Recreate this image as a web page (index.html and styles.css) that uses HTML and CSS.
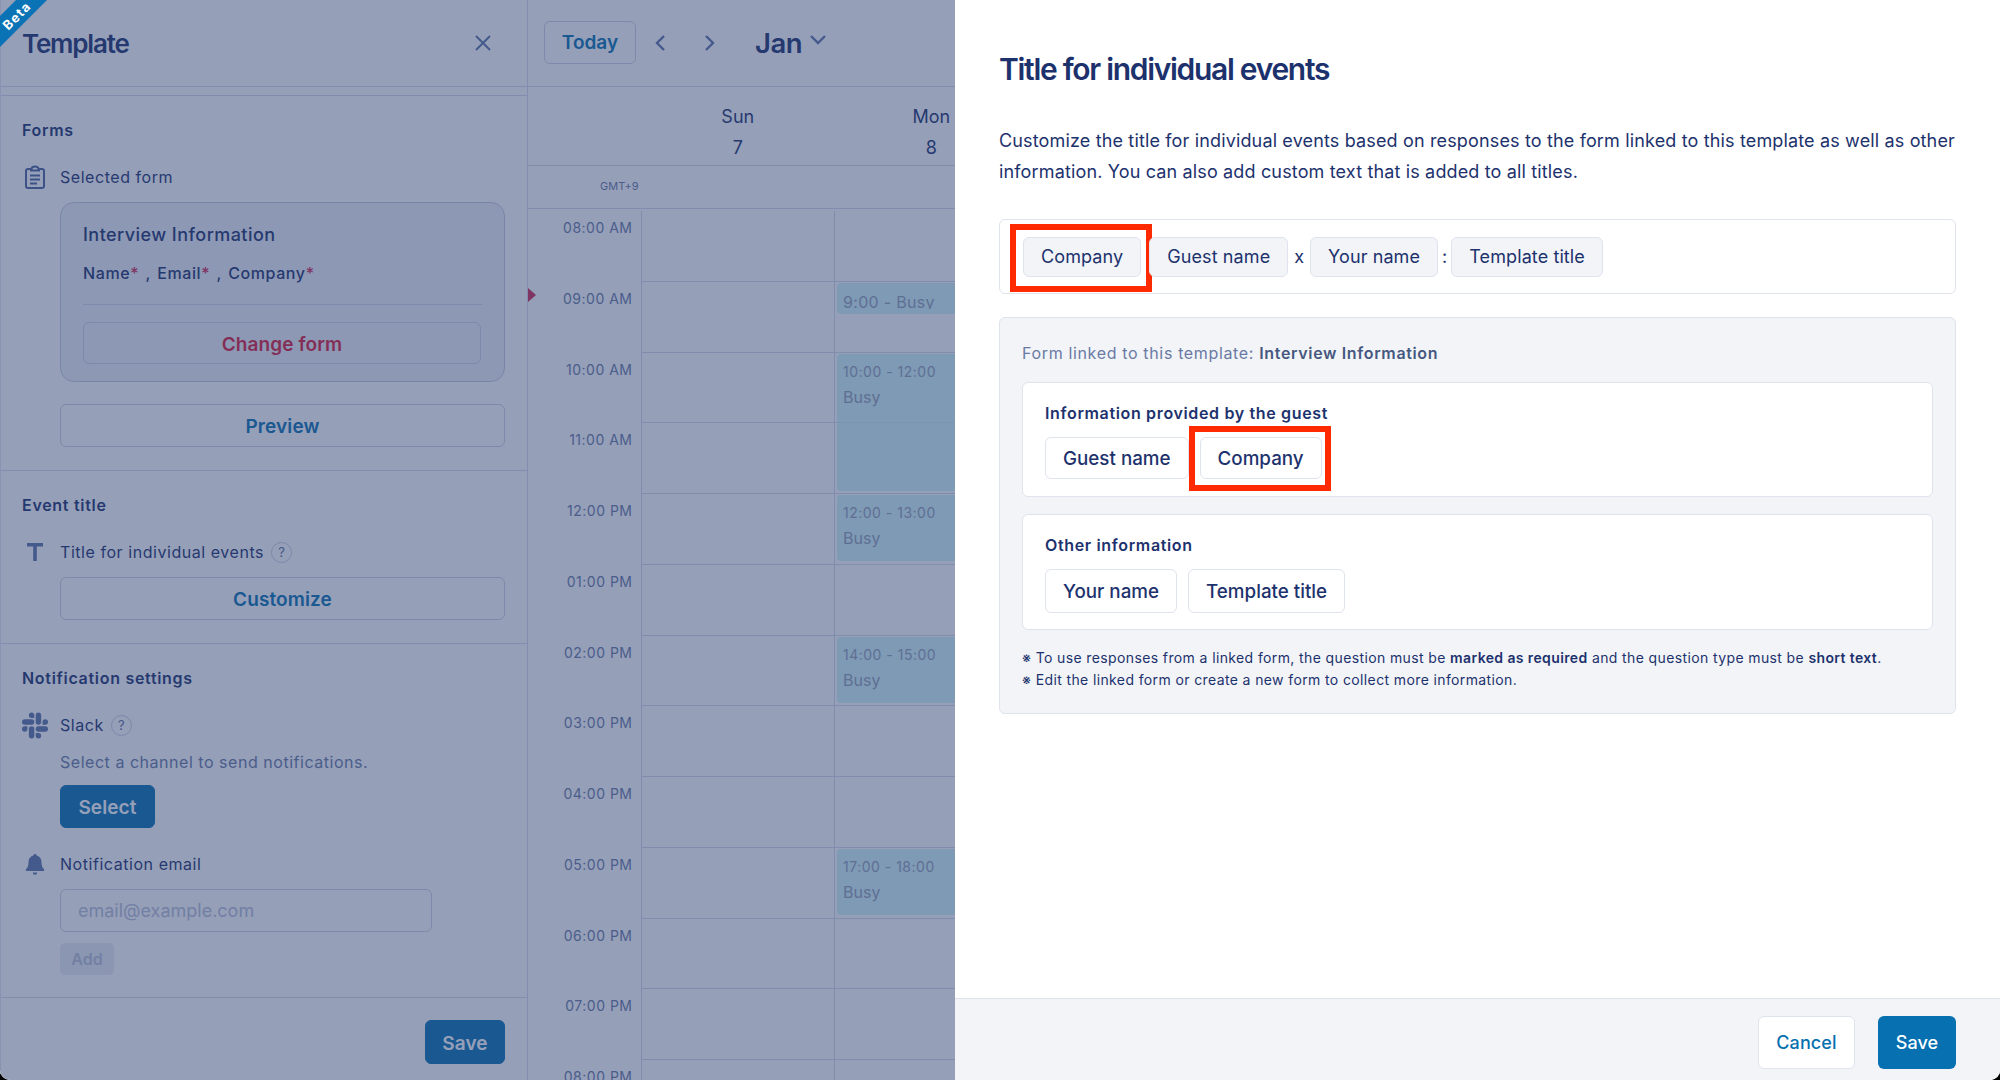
FILE: index.html
```html
<!DOCTYPE html>
<html lang="en">
<head>
<meta charset="utf-8">
<title>Title for individual events</title>
<link rel="stylesheet" href="styles.css">
</head>
<body>
<div class="app">
  <div class="behind">
    <aside class="side">
      <div class="ribbon"></div>
      <span class="ribbon-text">Beta</span>
      <header class="side-head">
        <h1 class="side-title">Template</h1>
        <svg class="close" viewBox="0 0 18 18" width="18" height="18"><path d="M2 2l14 14M16 2L2 16" fill="none" stroke="#5d74a7" stroke-width="2"/></svg>
      </header>
      <div class="side-rule"></div>
      <section class="sec sec-forms">
        <h2 class="sec-title">Forms</h2>
        <div class="row row-first">
          <span class="row-icon"><svg viewBox="0 0 22 24" width="22" height="24"><path d="M4 4h3.500a3.500 2.600 0 0 1 7 0H18a2 2 0 0 1 2 2v15a2 2 0 0 1-2 2H4a2 2 0 0 1-2-2V6a2 2 0 0 1 2-2z" fill="none" stroke="#4d659c" stroke-width="2"/><path d="M6 5.500h10M6 10.500h10M6 14.500h10M6 18.500h7" stroke="#4d659c" stroke-width="2" fill="none"/></svg></span>
          <span class="row-label">Selected form</span>
        </div>
        <div class="indent form-card">
          <div class="form-name">Interview Information</div>
          <div class="form-fields">Name<i>*</i> , Email<i>*</i> , Company<i>*</i></div>
          <div class="form-rule"></div>
          <button class="btn btn-danger btn-change">Change form</button>
        </div>
        <button class="indent btn btn-link btn-preview">Preview</button>
      </section>
      <section class="sec sec-event">
        <h2 class="sec-title">Event title</h2>
        <div class="row row-first">
          <span class="row-icon"><svg viewBox="0 0 16 18" width="16" height="18"><path d="M0 0h16v3.500H9.800V18H6.200V3.500H0z" fill="#5d74a7"/></svg></span>
          <span class="row-label">Title for individual events</span>
          <span class="help">?</span>
        </div>
        <button class="indent btn btn-link btn-custom">Customize</button>
      </section>
      <section class="sec sec-notify">
        <h2 class="sec-title">Notification settings</h2>
        <div class="row row-first">
          <span class="row-icon"><svg viewBox="0 0 24 24" width="27" height="27" fill="#5d74a7"><path d="M5.042 15.165a2.528 2.528 0 0 1-2.52 2.523A2.528 2.528 0 0 1 0 15.165a2.527 2.527 0 0 1 2.522-2.52h2.52v2.520zM6.313 15.165a2.527 2.527 0 0 1 2.521-2.52 2.527 2.527 0 0 1 2.521 2.520v6.313A2.528 2.528 0 0 1 8.834 24a2.528 2.528 0 0 1-2.521-2.522v-6.313zM8.834 5.042a2.528 2.528 0 0 1-2.521-2.52A2.528 2.528 0 0 1 8.834 0a2.528 2.528 0 0 1 2.521 2.522v2.520H8.834zM8.834 6.313a2.528 2.528 0 0 1 2.521 2.521 2.528 2.528 0 0 1-2.521 2.521H2.522A2.528 2.528 0 0 1 0 8.834a2.528 2.528 0 0 1 2.522-2.521h6.312zM18.956 8.834a2.528 2.528 0 0 1 2.522-2.521A2.528 2.528 0 0 1 24 8.834a2.528 2.528 0 0 1-2.522 2.521h-2.522V8.834zM17.688 8.834a2.528 2.528 0 0 1-2.523 2.521 2.527 2.527 0 0 1-2.52-2.521V2.522A2.527 2.527 0 0 1 15.165 0a2.528 2.528 0 0 1 2.523 2.522v6.312zM15.165 18.956a2.528 2.528 0 0 1 2.523 2.522A2.528 2.528 0 0 1 15.165 24a2.527 2.527 0 0 1-2.52-2.522v-2.522h2.520zM15.165 17.688a2.527 2.527 0 0 1-2.52-2.523 2.526 2.526 0 0 1 2.52-2.52h6.313A2.527 2.527 0 0 1 24 15.165a2.528 2.528 0 0 1-2.522 2.523h-6.313z"/></svg></span>
          <span class="row-label">Slack</span>
          <span class="help">?</span>
        </div>
        <div class="indent hint">Select a channel to send notifications.</div>
        <button class="indent btn btn-primary btn-select">Select</button>
        <div class="row row-email">
          <span class="row-icon"><svg viewBox="0 0 20 21" width="20" height="21"><path d="M10 0c1 0 1.500.6 1.700 1.400C15 2.300 16.500 5 16.500 8c0 3.500.6 5.300 2.500 7.200.6.600.3 1.800-.7 1.800H1.700c-1 0-1.300-1.200-.7-1.800C2.900 13.300 3.500 11.500 3.500 8c0-3 1.500-5.700 4.800-6.600C8.500.6 9 0 10 0z" fill="#5d74a7"/><path d="M7.800 18.500h4.400a2.200 2.200 0 0 1-4.400 0z" fill="#5d74a7"/></svg></span>
          <span class="row-label">Notification email</span>
        </div>
        <input class="indent email" type="text" placeholder="email@example.com">
        <button class="indent btn-add">Add</button>
      </section>
      <footer class="side-foot"><button class="btn btn-primary btn-save">Save</button></footer>
    </aside>
    <main class="cal">
      <div class="cal-bar">
        <button class="btn-today">Today</button>
        <svg class="nav-prev" viewBox="0 0 12 18" width="12" height="18"><path d="M10 2L3 9l7 7" fill="none" stroke="#5d74a7" stroke-width="2.400"/></svg>
        <svg class="nav-next" viewBox="0 0 12 18" width="12" height="18"><path d="M2 2l7 7-7 7" fill="none" stroke="#5d74a7" stroke-width="2.400"/></svg>
        <span class="month">Jan</span>
        <svg class="month-caret" viewBox="0 0 18 12" width="18" height="12"><path d="M2 2l7 7 7-7" fill="none" stroke="#5d74a7" stroke-width="2.400"/></svg>
      </div>
      <div class="days">
        <div class="days-gutter"></div>
        <div class="day-head">Sun<b>7</b></div>
        <div class="day-head">Mon<b>8</b></div>
      </div>
      <div class="tz"><span>GMT+9</span></div>
      <div class="cal-body">
        <div class="times">
          <span class="now"></span>
          <div class="time">08:00 AM</div><div class="time">09:00 AM</div><div class="time">10:00 AM</div><div class="time">11:00 AM</div><div class="time">12:00 PM</div><div class="time">01:00 PM</div><div class="time">02:00 PM</div><div class="time">03:00 PM</div><div class="time">04:00 PM</div><div class="time">05:00 PM</div><div class="time">06:00 PM</div><div class="time">07:00 PM</div><div class="time">08:00 PM</div>
        </div>
        <div class="col">
          <div class="cell"></div><div class="cell"></div><div class="cell"></div><div class="cell"></div><div class="cell"></div><div class="cell"></div><div class="cell"></div><div class="cell"></div><div class="cell"></div><div class="cell"></div><div class="cell"></div><div class="cell"></div><div class="cell"></div>
        </div>
        <div class="col">
          <div class="cell"></div>
          <div class="cell"><div class="ev ev-short"><span class="ev-line">9:00 - Busy</span></div></div>
          <div class="cell"><div class="ev ev-two"><span class="ev-time">10:00 - 12:00</span><span class="ev-busy">Busy</span></div></div>
          <div class="cell"></div>
          <div class="cell"><div class="ev ev-one"><span class="ev-time">12:00 - 13:00</span><span class="ev-busy">Busy</span></div></div>
          <div class="cell"></div>
          <div class="cell"><div class="ev ev-one"><span class="ev-time">14:00 - 15:00</span><span class="ev-busy">Busy</span></div></div>
          <div class="cell"></div>
          <div class="cell"></div>
          <div class="cell"><div class="ev ev-one"><span class="ev-time">17:00 - 18:00</span><span class="ev-busy">Busy</span></div></div>
          <div class="cell"></div><div class="cell"></div><div class="cell"></div>
        </div>
      </div>
    </main>
  </div>
  <section class="modal">
    <div class="modal-main">
      <h2 class="modal-title">Title for individual events</h2>
      <p class="modal-desc">Customize the title for individual events based on responses to the form linked to this template as well as other information. You can also add custom text that is added to all titles.</p>
      <div class="title-box">
        <span class="chip chip-flat chip-mark-a">Company</span>
        <span class="chip chip-flat">Guest name</span>
        <span class="sep sep-x">x</span>
        <span class="chip chip-flat">Your name</span>
        <span class="sep sep-colon">:</span>
        <span class="chip chip-flat">Template title</span>
      </div>
      <div class="linked">
        <div class="linked-head">Form linked to this template: <b>Interview Information</b></div>
        <div class="group group-guest">
          <h3 class="group-title">Information provided by the guest</h3>
          <div class="chips">
            <span class="chip chip-solid">Guest name</span>
            <span class="chip chip-solid chip-mark-b">Company</span>
          </div>
        </div>
        <div class="group group-other">
          <h3 class="group-title">Other information</h3>
          <div class="chips">
            <span class="chip chip-solid">Your name</span>
            <span class="chip chip-solid">Template title</span>
          </div>
        </div>
        <p class="note note-first">※ To use responses from a linked form, the question must be <b>marked as required</b> and the question type must be <b>short text</b>.</p>
        <p class="note">※ Edit the linked form or create a new form to collect more information.</p>
      </div>
    </div>
    <footer class="modal-foot">
      <button class="foot-btn foot-cancel">Cancel</button>
      <button class="foot-btn foot-save">Save</button>
    </footer>
  </section>
</div>
</body>
</html>
```
FILE: styles.css
```css
* { box-sizing: border-box; }
html, body { margin: 0; padding: 0; background: #000; overflow: hidden; }
body { font-family: "Inter", "Liberation Sans", sans-serif; color: #1d326d; width: 2000px; height: 1080px; }
h1, h2, h3, p { margin: 0; }
button { font-family: inherit; cursor: pointer; }

.app { display: flex; width: 2000px; height: 1080px; background: #fff; border-radius: 0 0 10px 10px; overflow: hidden; }
.behind { position: relative; display: flex; width: 955px; flex: none; overflow: hidden; }
.behind::after { content: ""; position: absolute; inset: 0; z-index: 5; background: rgba(43, 64, 113, .5); }

/* left panel */
.side { position: relative; width: 528px; flex: none; border-right: 1px solid #d7dce8; border-left: 1px solid #e3e6ee; display: flex; flex-direction: column; background: #fff; }
.ribbon { position: absolute; z-index: 6; left: -1px; top: 0; width: 48px; height: 48px; background: #0a73b5; clip-path: polygon(16px 0, 47px 0, 0 47px, 0 16px); }
.ribbon-text { position: absolute; z-index: 7; left: -1px; top: 9px; width: 32px; text-align: center; white-space: nowrap; font-size: 13px; line-height: 14px; font-weight: 700; letter-spacing: 1.200px; color: #fff; transform: rotate(-45deg); }
.side-head { height: 87px; flex: none; display: flex; align-items: center; justify-content: space-between; padding: 0 35px 0 21px; border-bottom: 1px solid #d5dae6; }
.side-title { font-size: 26px; font-weight: 600; letter-spacing: -1.200px; color: #1d326d; }
.side-rule { height: 9px; flex: none; border-bottom: 1px solid #d5dae6; }
.sec { padding: 24px 23px 22px 21px; border-bottom: 1px solid #d5dae6; display: flex; flex-direction: column; align-items: flex-start; flex: none; }
.sec-forms { height: 375px; }
.sec-event { height: 173px; }
.sec-notify { height: 354px; }
.sec-title { font-size: 16px; line-height: 20px; font-weight: 600; letter-spacing: .7px; color: #1d326d; }
.row { display: flex; align-items: center; height: 24px; }
.row-first { margin-top: 25px; }
.row-icon { width: 38px; height: 24px; flex: none; display: flex; align-items: center; justify-content: center; padding-right: 12px; }
.row-label { font-size: 16px; letter-spacing: .55px; color: #1d326d; }
.help { width: 21px; height: 21px; margin-left: 7px; border: 1px solid #c8cedf; border-radius: 50%; font-size: 13px; line-height: 19px; text-align: center; color: #5a6c99; }
.indent { margin-left: 38px; }
.form-card { width: 445px; height: 180px; margin-top: 13px; padding: 20px 22px 0; border: 1px solid #c5cbde; border-radius: 14px; background: #eef0f6; }
.form-name { font-size: 18px; line-height: 24px; font-weight: 500; letter-spacing: .45px; }
.form-fields { margin-top: 16px; font-size: 16px; line-height: 20px; font-weight: 500; letter-spacing: .6px; word-spacing: 1.500px; }
.form-fields i { font-style: normal; color: #d32a55; }
.form-rule { margin-top: 21px; height: 1px; background: #cfd5e4; }
.btn { display: block; padding: 2px 0 0; font-size: 19px; font-weight: 600; letter-spacing: .1px; background: #fff; border: 1px solid #ccd2e2; border-radius: 6px; }
.btn-danger { color: #dc1c3c; }
.btn-link { color: #0670b0; }
.btn-change { width: 398px; height: 42px; margin-top: 17px; background: transparent; }
.btn-preview { width: 445px; height: 43px; margin-top: 22px; }
.btn-custom { width: 445px; height: 43px; margin-top: 13px; }
.hint { margin-top: 15px; font-size: 16px; line-height: 20px; letter-spacing: .53px; color: #6a7aa3; }
.btn-primary { background: #0670b0; border-color: #0670b0; color: #fff; }
.btn-select { width: 95px; height: 43px; margin-top: 13px; }
.row-email { margin-top: 24px; }
.email { display: block; width: 372px; height: 43px; margin-top: 13px; padding: 0 17px; font: 400 18px "Inter", sans-serif; border: 1px solid #ccd2e2; border-radius: 6px; background: #fff; outline: 0; }
.email::placeholder { color: #b9c0d4; }
.btn-add { display: block; width: 54px; height: 32px; margin-top: 11px; padding: 0; font-size: 16px; font-weight: 600; color: #b9c0d4; background: #eaecf3; border: 0; border-radius: 5px; }
.side-foot { flex: 1; display: flex; justify-content: flex-end; align-items: flex-start; padding: 22px 22px 0 0; }
.btn-save { width: 80px; height: 44px; }

/* calendar */
.cal { flex: 1; min-width: 0; background: #fff; display: flex; flex-direction: column; }
.cal-bar { height: 87px; flex: none; display: flex; align-items: center; padding: 0 0 1px 16px; border-bottom: 1px solid #d5dae6; }
.btn-today { width: 92px; height: 43px; padding: 0; font-size: 19px; font-weight: 600; color: #0670b0; background: #fff; border: 1px solid #ccd2e2; border-radius: 6px; }
.nav-prev { margin-left: 18px; }
.nav-next { margin-left: 38px; }
.month { margin-left: 39px; font-size: 27.500px; font-weight: 600; letter-spacing: -.5px; }
.month-caret { margin: 0 0 6px 7px; }
.days { height: 79px; flex: none; display: flex; border-bottom: 1px solid #d5dae6; }
.days-gutter { width: 113px; flex: none; }
.day-head { width: 193.500px; flex: none; padding-top: 18px; text-align: center; font-size: 18px; line-height: 24px; }
.day-head b { display: block; margin-top: 7px; font-weight: 400; font-size: 18px; line-height: 24px; }
.tz { height: 43px; flex: none; border-bottom: 1px solid #d5dae6; padding: 13px 0 0 72px; font-size: 11px; line-height: 15px; color: #6a7aa3; }
.cal-body { display: flex; padding-top: 2px; }
.times { position: relative; width: 112.500px; flex: none; }
.time { height: 70.750px; padding: 8px 8px 0 0; text-align: right; font-size: 14px; line-height: 18px; letter-spacing: .5px; color: #6a7aa3; }
.now { position: absolute; left: 0; top: 77px; width: 0; height: 0; border-left: 8px solid #d32a55; border-top: 7px solid transparent; border-bottom: 7px solid transparent; }
.col { width: 193.500px; flex: none; border-left: 1px solid #d5dae6; }
.cell { position: relative; height: 70.750px; border-bottom: 1px solid #d5dae6; }
.ev { position: absolute; left: 2px; top: 1px; width: 200px; z-index: 1; padding: 8px 6px 0; border-radius: 4px; background: rgba(194, 240, 247, .75); color: #939eb5; overflow: hidden; }
.ev-short { height: 31px; }
.ev-one { height: 66px; }
.ev-two { height: 137px; }
.ev-time { display: block; font-size: 14px; line-height: 20px; letter-spacing: .5px; }
.ev-busy { display: block; margin-top: 5px; font-size: 16px; line-height: 20px; }
.ev-line { display: block; height: 18px; overflow: hidden; font-size: 16px; line-height: 22px; letter-spacing: .3px; }

/* modal */
.modal { flex: 1; min-width: 0; display: flex; flex-direction: column; background: #fff; }
.modal-main { flex: 1; padding: 49px 44px 0 44px; }
.modal-title { font-size: 30px; line-height: 40px; font-weight: 600; letter-spacing: -1.300px; color: #1d326d; }
.modal-desc { margin-top: 36px; font-size: 18px; line-height: 31px; letter-spacing: .15px; color: #1d326d; }
.title-box { display: flex; align-items: center; height: 75px; margin-top: 32px; padding-left: 23px; border: 1px solid #dfe3ee; border-radius: 6px; background: #fff; }
.chip { position: relative; display: inline-flex; align-items: center; padding: 0 17px; font-size: 18px; border-radius: 6px; }
.chip-flat { height: 40px; background: #f2f4f8; border: 1px solid #dfe3ee; letter-spacing: .1px; }
.chip-mark-a { margin-right: 8px; }
.chip-mark-a::after { content: ""; position: absolute; left: -14px; right: -12px; top: -14px; bottom: -16px; border: 6px solid #ff2a00; }
.sep { font-size: 18px; }
.sep-x { margin: 0 6px; }
.sep-colon { margin: 0 4px; }
.linked { height: 397px; margin-top: 23px; padding: 25px 22px 0; border: 1px solid #dfe3ee; border-radius: 6px; background: #f2f4f8; }
.linked-head { font-size: 16px; line-height: 20px; letter-spacing: .65px; color: #6a7aa3; }
.linked-head b { font-weight: 600; color: #46587f; }
.group { margin-top: 19px; padding: 20px 22px 0; border: 1px solid #dfe3ee; border-radius: 6px; background: #fff; }
.group-guest { height: 115px; }
.group-other { height: 116px; margin-top: 17px; }
.group-title { font-size: 16px; line-height: 20px; font-weight: 600; letter-spacing: .65px; }
.chips { display: flex; gap: 11px; margin-top: 14px; }
.chip-solid { height: 42px; background: #fff; border: 1px solid #dfe3ee; font-size: 18.800px; font-weight: 500; }
.group-other .chip-solid { height: 44px; }
.chip-mark-b::after { content: ""; position: absolute; left: -12px; right: -10px; top: -12px; bottom: -13px; border: 6px solid #ff2a00; }
.note { font-size: 14px; line-height: 22px; letter-spacing: .38px; }
.note b { font-weight: 600; }
.note-first { margin-top: 17px; }
.modal-foot { height: 82px; flex: none; display: flex; justify-content: flex-end; gap: 23px; padding: 17px 44px 0 0; background: #f2f4f8; border-top: 1px solid #dfe3ee; }
.foot-btn { height: 53px; padding: 0; font-size: 18px; font-weight: 500; letter-spacing: .1px; border-radius: 6px; }
.foot-cancel { width: 97px; color: #0670b0; background: #fff; border: 1px solid #dfe3ee; }
.foot-save { width: 78px; color: #fff; background: #0670b0; border: 0; }
```
